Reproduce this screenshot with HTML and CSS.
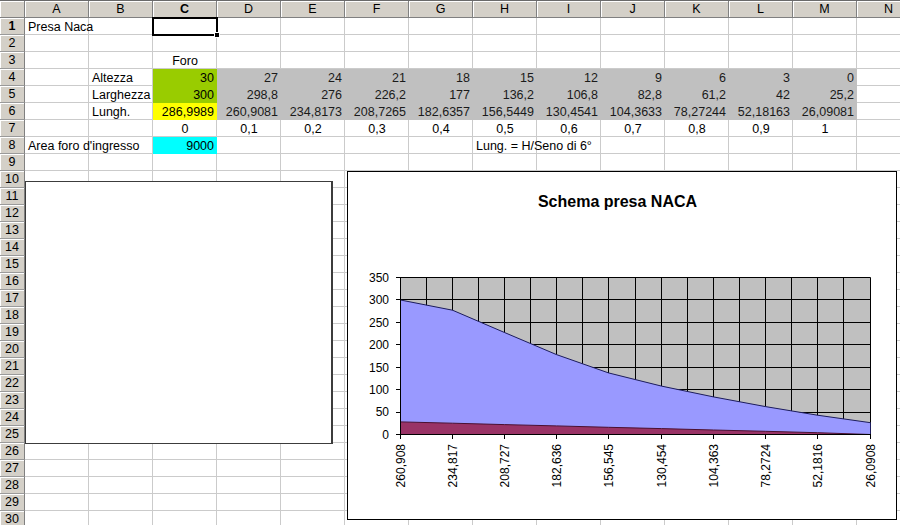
FILE: index.html
```html
<!DOCTYPE html>
<html lang="it">
<head>
<meta charset="utf-8">
<title>Presa Naca</title>
<link rel="stylesheet" href="styles.css">
</head>
<body>
<div class="sheet">
  <div class="colhead">
    <div class="corner"></div>
    <div class="ch">A</div><div class="ch">B</div><div class="ch sel">C</div><div class="ch">D</div>
    <div class="ch">E</div><div class="ch">F</div><div class="ch">G</div><div class="ch">H</div>
    <div class="ch">I</div><div class="ch">J</div><div class="ch">K</div><div class="ch">L</div>
    <div class="ch">M</div><div class="ch">N</div>
  </div>

  <div class="row"><div class="rh sel">1</div><div class="c">Presa Naca</div><div class="c"></div><div class="c active"></div></div>
  <div class="row"><div class="rh">2</div></div>
  <div class="row"><div class="rh">3</div><div class="c"></div><div class="c"></div><div class="c ctr">Foro</div></div>
  <div class="row"><div class="rh">4</div><div class="c"></div><div class="c">Altezza</div>
    <div class="c num green">30</div>
    <div class="c num grey">27</div><div class="c num grey">24</div><div class="c num grey">21</div><div class="c num grey">18</div><div class="c num grey">15</div>
    <div class="c num grey">12</div><div class="c num grey">9</div><div class="c num grey">6</div><div class="c num grey">3</div><div class="c num grey">0</div>
  </div>
  <div class="row"><div class="rh">5</div><div class="c"></div><div class="c">Larghezza</div>
    <div class="c num green">300</div>
    <div class="c num grey">298,8</div><div class="c num grey">276</div><div class="c num grey">226,2</div><div class="c num grey">177</div><div class="c num grey">136,2</div>
    <div class="c num grey">106,8</div><div class="c num grey">82,8</div><div class="c num grey">61,2</div><div class="c num grey">42</div><div class="c num grey">25,2</div>
  </div>
  <div class="row"><div class="rh">6</div><div class="c"></div><div class="c">Lungh.</div>
    <div class="c num yellow">286,9989</div>
    <div class="c num grey">260,9081</div><div class="c num grey">234,8173</div><div class="c num grey">208,7265</div><div class="c num grey">182,6357</div><div class="c num grey">156,5449</div>
    <div class="c num grey">130,4541</div><div class="c num grey">104,3633</div><div class="c num grey">78,27244</div><div class="c num grey">52,18163</div><div class="c num grey">26,09081</div>
  </div>
  <div class="row"><div class="rh">7</div><div class="c"></div><div class="c"></div>
    <div class="c ctr">0</div><div class="c ctr">0,1</div><div class="c ctr">0,2</div><div class="c ctr">0,3</div><div class="c ctr">0,4</div><div class="c ctr">0,5</div>
    <div class="c ctr">0,6</div><div class="c ctr">0,7</div><div class="c ctr">0,8</div><div class="c ctr">0,9</div><div class="c ctr">1</div>
  </div>
  <div class="row"><div class="rh">8</div><div class="c">Area foro d'ingresso</div><div class="c"></div>
    <div class="c num cyan">9000</div>
    <div class="c"></div><div class="c"></div><div class="c"></div><div class="c"></div><div class="c">Lung. = H/Seno di 6°</div>
  </div>
  <div class="row"><div class="rh">9</div></div>
  <div class="row"><div class="rh">10</div></div>
  <div class="row"><div class="rh">11</div></div>
  <div class="row"><div class="rh">12</div></div>
  <div class="row"><div class="rh">13</div></div>
  <div class="row"><div class="rh">14</div></div>
  <div class="row"><div class="rh">15</div></div>
  <div class="row"><div class="rh">16</div></div>
  <div class="row"><div class="rh">17</div></div>
  <div class="row"><div class="rh">18</div></div>
  <div class="row"><div class="rh">19</div></div>
  <div class="row"><div class="rh">20</div></div>
  <div class="row"><div class="rh">21</div></div>
  <div class="row"><div class="rh">22</div></div>
  <div class="row"><div class="rh">23</div></div>
  <div class="row"><div class="rh">24</div></div>
  <div class="row"><div class="rh">25</div></div>
  <div class="row"><div class="rh">26</div></div>
  <div class="row"><div class="rh">27</div></div>
  <div class="row"><div class="rh">28</div></div>
  <div class="row"><div class="rh">29</div></div>
  <div class="row"><div class="rh">30</div></div>

  <div class="textbox"></div>

  <div class="chart">
    <svg width="550" height="349" viewBox="0 0 550 349" xmlns="http://www.w3.org/2000/svg">
      <rect x="0.5" y="0.5" width="549" height="348" fill="#fff" stroke="#000"/>
      <text class="title" x="270.5" y="36.3" text-anchor="middle">Schema presa NACA</text>
      <rect x="53.5" y="106.5" width="470" height="157" fill="#c0c0c0"/>
      <g stroke="#000" stroke-width="1">
        <line x1="53.5" y1="106.5" x2="523.5" y2="106.5"/>
        <line x1="53.5" y1="128.5" x2="523.5" y2="128.5"/>
        <line x1="53.5" y1="151.5" x2="523.5" y2="151.5"/>
        <line x1="53.5" y1="173.5" x2="523.5" y2="173.5"/>
        <line x1="53.5" y1="196.5" x2="523.5" y2="196.5"/>
        <line x1="53.5" y1="218.5" x2="523.5" y2="218.5"/>
        <line x1="53.5" y1="241.5" x2="523.5" y2="241.5"/>
        <line x1="79.5" y1="106.5" x2="79.5" y2="263.5"/>
        <line x1="105.5" y1="106.5" x2="105.5" y2="263.5"/>
        <line x1="131.5" y1="106.5" x2="131.5" y2="263.5"/>
        <line x1="157.5" y1="106.5" x2="157.5" y2="263.5"/>
        <line x1="183.5" y1="106.5" x2="183.5" y2="263.5"/>
        <line x1="209.5" y1="106.5" x2="209.5" y2="263.5"/>
        <line x1="235.5" y1="106.5" x2="235.5" y2="263.5"/>
        <line x1="261.5" y1="106.5" x2="261.5" y2="263.5"/>
        <line x1="288.5" y1="106.5" x2="288.5" y2="263.5"/>
        <line x1="314.5" y1="106.5" x2="314.5" y2="263.5"/>
        <line x1="340.5" y1="106.5" x2="340.5" y2="263.5"/>
        <line x1="366.5" y1="106.5" x2="366.5" y2="263.5"/>
        <line x1="392.5" y1="106.5" x2="392.5" y2="263.5"/>
        <line x1="418.5" y1="106.5" x2="418.5" y2="263.5"/>
        <line x1="444.5" y1="106.5" x2="444.5" y2="263.5"/>
        <line x1="470.5" y1="106.5" x2="470.5" y2="263.5"/>
        <line x1="496.5" y1="106.5" x2="496.5" y2="263.5"/>
        <line x1="523.5" y1="106.5" x2="523.5" y2="263.5"/>
      </g>
      <polygon fill="#9999ff" stroke="#1c1c5c" stroke-width="1"
        points="53.5,263.5 53.5,129 105.5,139.2 157.5,161.5 209.5,183.6 261.5,201.9 314.5,215.1 366.5,225.9 418.5,235.6 470.5,244.2 523.5,251.7 523.5,263.5"/>
      <polygon fill="#993366" stroke="#4a1030" stroke-width="1"
        points="53.5,263.5 53.5,250.9 105.5,252.2 157.5,253.6 209.5,254.9 261.5,256.3 314.5,257.6 366.5,259 418.5,260.3 470.5,261.7 523.5,263.5"/>
      <g stroke="#000" stroke-width="1">
        <line x1="53.5" y1="106" x2="53.5" y2="264"/>
        <line x1="53" y1="263.5" x2="524" y2="263.5"/>
        <line x1="49" y1="106.5" x2="53.5" y2="106.5"/>
        <line x1="49" y1="128.5" x2="53.5" y2="128.5"/>
        <line x1="49" y1="151.5" x2="53.5" y2="151.5"/>
        <line x1="49" y1="173.5" x2="53.5" y2="173.5"/>
        <line x1="49" y1="196.5" x2="53.5" y2="196.5"/>
        <line x1="49" y1="218.5" x2="53.5" y2="218.5"/>
        <line x1="49" y1="241.5" x2="53.5" y2="241.5"/>
        <line x1="49" y1="263.5" x2="53.5" y2="263.5"/>
        <line x1="53.5" y1="263.5" x2="53.5" y2="268"/>
        <line x1="105.5" y1="263.5" x2="105.5" y2="268"/>
        <line x1="157.5" y1="263.5" x2="157.5" y2="268"/>
        <line x1="209.5" y1="263.5" x2="209.5" y2="268"/>
        <line x1="261.5" y1="263.5" x2="261.5" y2="268"/>
        <line x1="314.5" y1="263.5" x2="314.5" y2="268"/>
        <line x1="366.5" y1="263.5" x2="366.5" y2="268"/>
        <line x1="418.5" y1="263.5" x2="418.5" y2="268"/>
        <line x1="470.5" y1="263.5" x2="470.5" y2="268"/>
        <line x1="523.5" y1="263.5" x2="523.5" y2="268"/>
      </g>
      <g class="lbl" text-anchor="end">
        <text x="42" y="110.8">350</text>
        <text x="42" y="133.2">300</text>
        <text x="42" y="155.7">250</text>
        <text x="42" y="178.1">200</text>
        <text x="42" y="200.5">150</text>
        <text x="42" y="223">100</text>
        <text x="42" y="245.4">50</text>
        <text x="42" y="267.8">0</text>
      </g>
      <g class="lbl" text-anchor="end">
        <text transform="translate(57.5 273) rotate(-90)">260,908</text>
        <text transform="translate(109.5 273) rotate(-90)">234,817</text>
        <text transform="translate(161.5 273) rotate(-90)">208,727</text>
        <text transform="translate(213.5 273) rotate(-90)">182,636</text>
        <text transform="translate(265.5 273) rotate(-90)">156,545</text>
        <text transform="translate(318.5 273) rotate(-90)">130,454</text>
        <text transform="translate(370.5 273) rotate(-90)">104,363</text>
        <text transform="translate(422.5 273) rotate(-90)">78,2724</text>
        <text transform="translate(474.5 273) rotate(-90)">52,1816</text>
        <text transform="translate(527.5 273) rotate(-90)">26,0908</text>
      </g>
    </svg>
  </div>
</div>
</body>
</html>
```
FILE: styles.css
```css
html, body {
  margin: 0;
  padding: 0;
  background: #fff;
}

.sheet {
  position: relative;
  width: 900px;
  height: 525px;
  overflow: hidden;
  font-family: "Liberation Sans", Arial, sans-serif;
  font-size: 12.5px;
  color: #000;
}

.colhead {
  display: flex;
  height: 18px;
  box-sizing: border-box;
  border-top: 1px solid #6a6a6a;
}

.corner,
.ch {
  flex: 0 0 64px;
  min-width: 0;
  box-sizing: border-box;
  background: #d4d0c8;
  border-right: 1px solid #808080;
  border-bottom: 1px solid #808080;
  box-shadow: inset 1px 1px 0 #fff;
  text-align: center;
  line-height: 16px;
}

.corner {
  flex-basis: 25px;
}

.sel {
  font-weight: bold;
}

.row {
  display: flex;
  height: 17px;
  background-image:
    linear-gradient(to right, transparent 63px, #cbcbcb 63px),
    linear-gradient(to bottom, transparent 16px, #cbcbcb 16px);
  background-size: 64px 17px, 100% 17px;
  background-position: 25px 0, 0 0;
}

.rh {
  flex: 0 0 25px;
  min-width: 0;
  box-sizing: border-box;
  height: 17px;
  background: #d4d0c8;
  border-right: 1px solid #808080;
  border-bottom: 1px solid #9a9a9a;
  box-shadow: inset 1px 1px 0 #fff;
  text-align: center;
  padding-top: 1px;
  line-height: 15px;
}

.c {
  flex: 0 0 64px;
  width: 64px;
  min-width: 0;
  max-width: 64px;
  box-sizing: border-box;
  height: 17px;
  padding: 2px 3px 0;
  line-height: 15px;
  white-space: nowrap;
  overflow: visible;
}

.num {
  text-align: right;
}

.ctr {
  text-align: center;
}

.green { background: #99cc00; }
.yellow { background: #ffff00; }
.cyan { background: #00ffff; }
.grey { background: #c0c0c0; color: #1a1a1a; }

.active {
  position: relative;
  box-shadow: 0 0 0 1px #000, inset 0 0 0 1px #000;
}

.active::after {
  content: "";
  position: absolute;
  right: -3px;
  bottom: -3px;
  width: 4px;
  height: 4px;
  background: #000;
  border: 1px solid #fff;
}

.textbox {
  position: absolute;
  left: 25px;
  top: 181px;
  width: 308px;
  height: 263px;
  box-sizing: border-box;
  background: #fff;
  border: 1px solid #3c3c3c;
  border-right-width: 2px;
}

.chart {
  position: absolute;
  left: 347px;
  top: 171px;
  width: 550px;
  height: 349px;
}

.chart svg {
  display: block;
  font-family: "Liberation Sans", Arial, sans-serif;
}

.title {
  font-size: 16px;
  font-weight: bold;
  fill: #000;
}

.lbl {
  font-size: 12px;
  fill: #000;
}
```
